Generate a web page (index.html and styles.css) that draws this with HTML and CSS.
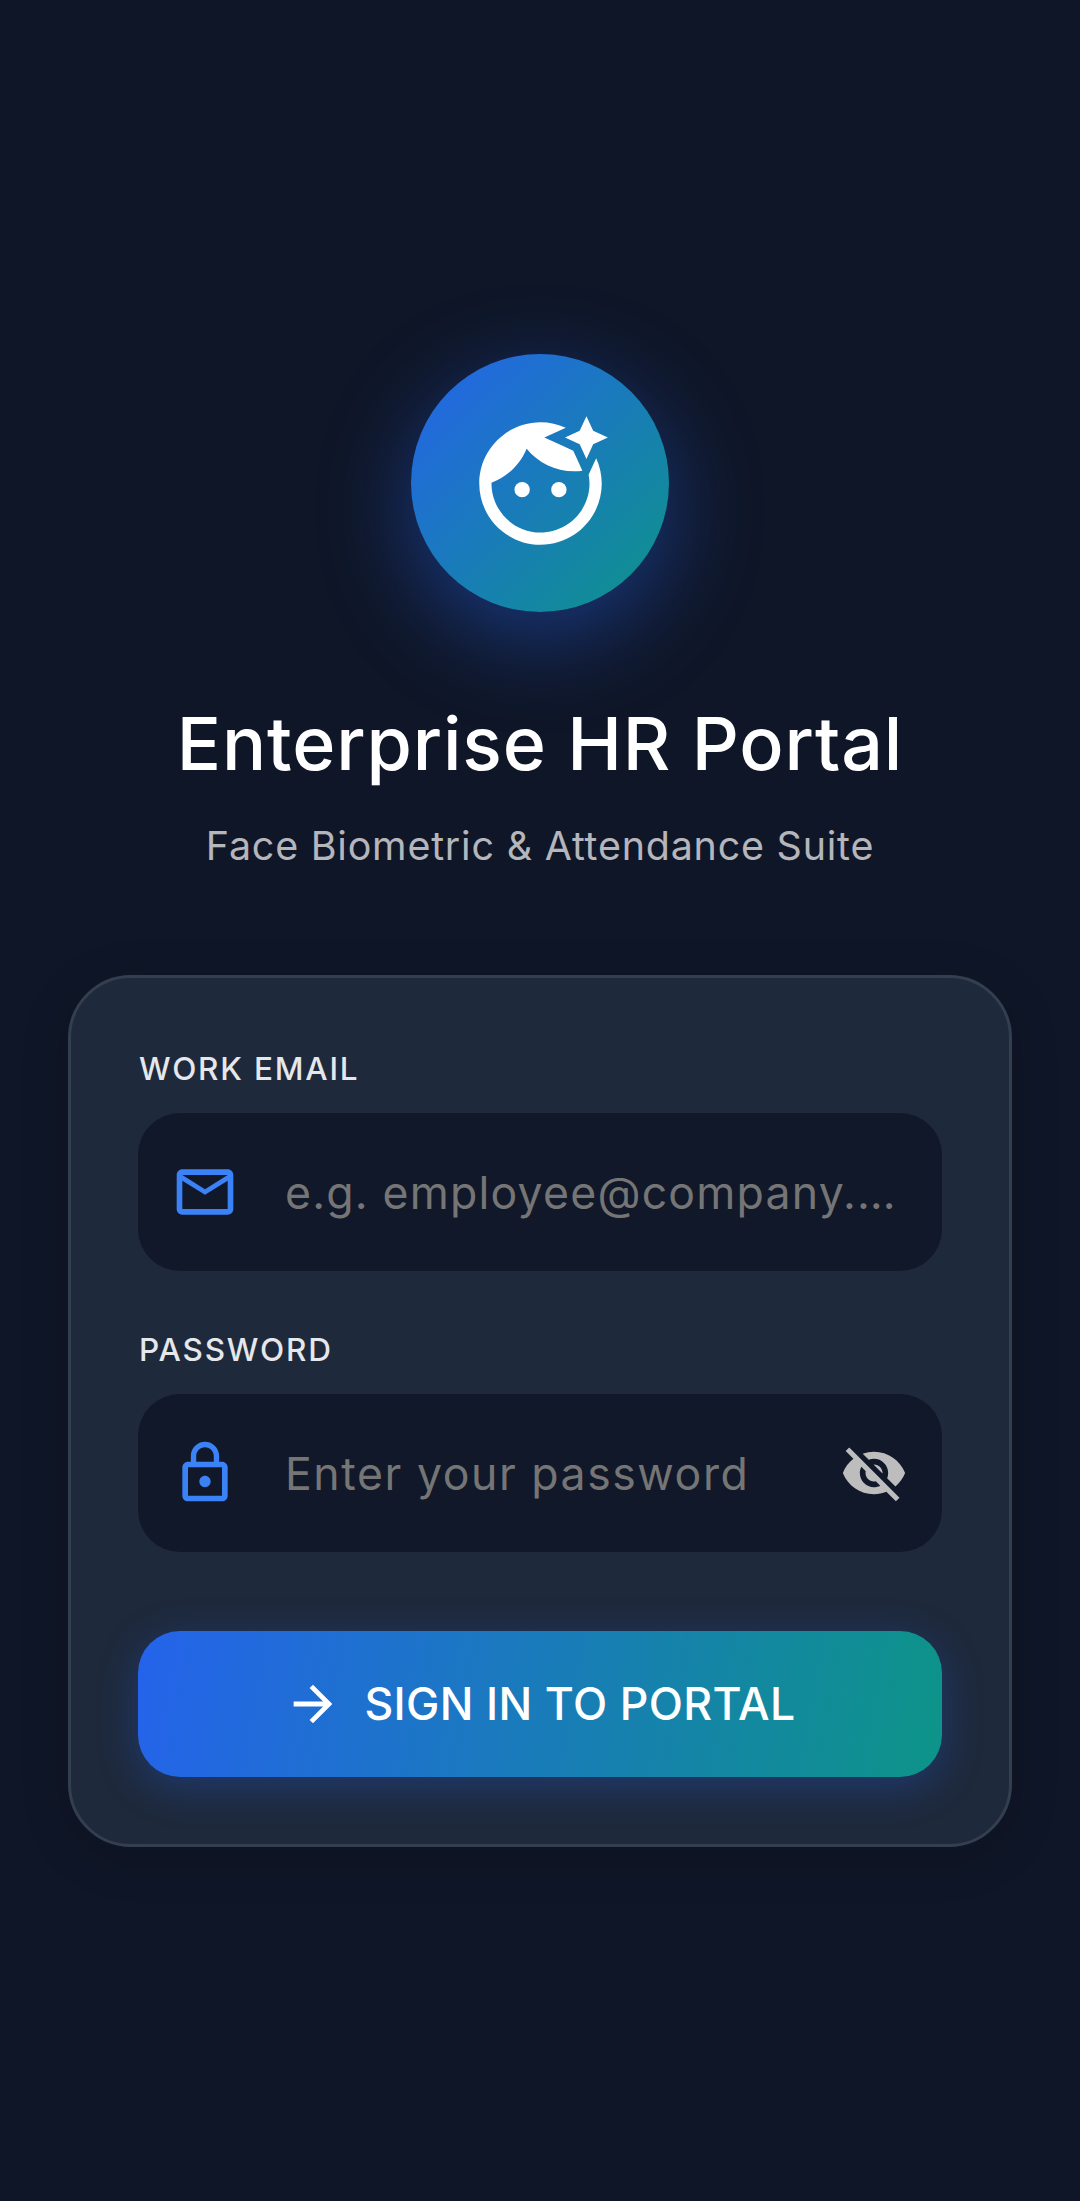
FILE: index.html
```html
<!DOCTYPE html>
<html lang="en">
<head>
<meta charset="utf-8">
<title>Enterprise HR Portal</title>
<link rel="stylesheet" href="styles.css">
</head>
<body>
<main class="screen">
  <div class="logo">
    <svg class="logo-icon" viewBox="0 0 24 24" fill="#fff"><circle cx="9" cy="13" r="1.25"/><path d="M20.77 8.58l-.92 2.01c.09.46.15.93.15 1.41 0 4.41-3.59 8-8 8s-8-3.59-8-8c0-.05.01-.1 0-.14 2.6-.98 4.69-2.99 5.74-5.55C11.58 8.56 14.37 10 17.5 10c.45 0 .89-.04 1.33-.1l-.6-1.32-.88-1.93-1.93-.88-2.79-1.27 2.79-1.27.71-.32C14.87 2.33 13.47 2 12 2 6.48 2 2 6.48 2 12s4.48 10 10 10 10-4.48 10-10c0-1.47-.33-2.87-.9-4.13l-.33.71z"/><circle cx="15" cy="13" r="1.25"/><path d="M20.6 5.6L19.5 8l-1.1-2.4L16 4.5l2.4-1.1L19.5 1l1.1 2.4L23 4.5z"/></svg>
  </div>
  <h1 class="title">Enterprise HR Portal</h1>
  <p class="subtitle">Face Biometric &amp; Attendance Suite</p>
  <form class="card">
    <div class="label">WORK EMAIL</div>
    <div class="field">
      <svg class="field-icon" viewBox="0 0 24 24" fill="#3b82f6"><path d="M20 4H4c-1.1 0-1.99.9-1.99 2L2 18c0 1.1.9 2 2 2h16c1.1 0 2-.9 2-2V6c0-1.1-.9-2-2-2zm0 14H4V8l8 5 8-5v10zm-8-7L4 6h16l-8 5z"/></svg>
      <div class="placeholder placeholder-email">e.g. employee@company.…</div>
    </div>
    <div class="label label-second">PASSWORD</div>
    <div class="field">
      <svg class="field-icon" viewBox="0 0 24 24" fill="#3b82f6"><path d="M12 17c1.1 0 2-.9 2-2s-.9-2-2-2-2 .9-2 2 .9 2 2 2zm6-9h-1V6c0-2.76-2.24-5-5-5S7 3.24 7 6v2H6c-1.1 0-2 .9-2 2v10c0 1.1.9 2 2 2h12c1.1 0 2-.9 2-2V10c0-1.1-.9-2-2-2zM8.9 6c0-1.71 1.39-3.1 3.1-3.1s3.1 1.39 3.1 3.1v2H8.9V6zM18 20H6V10h12v10z"/></svg>
      <div class="placeholder">Enter your password</div>
      <svg class="field-icon eye" viewBox="0 0 24 24" fill="#bdbdbd"><path d="M12 7c2.76 0 5 2.24 5 5 0 .65-.13 1.26-.36 1.83l2.92 2.92c1.51-1.26 2.7-2.89 3.43-4.75-1.73-4.39-6-7.5-11-7.5-1.4 0-2.74.25-3.98.7l2.16 2.16C10.74 7.13 11.35 7 12 7zM2 4.27l2.28 2.28.46.46C3.08 8.3 1.78 10.02 1 12c1.73 4.39 6 7.5 11 7.5 1.55 0 3.03-.3 4.38-.85l.42.42L19.73 22 21 20.73 3.27 3 2 4.27zM7.53 9.8l1.55 1.55c-.05.21-.08.43-.08.65 0 1.66 1.34 3 3 3 .22 0 .44-.03.65-.08l1.55 1.55c-.67.33-1.41.53-2.2.53-2.76 0-5-2.24-5-5 0-.79.2-1.53.53-2.2zm4.31-.78l3.15 3.15.02-.16c0-1.66-1.34-3-3-3l-.17.01z"/></svg>
    </div>
    <div class="button">
      <svg class="button-icon" viewBox="0 0 24 24" fill="#fff"><path d="M12 4l-1.41 1.41L16.17 11H4v2h12.17l-5.58 5.59L12 20l8-8z"/></svg>
      <span>SIGN IN TO PORTAL</span>
    </div>
  </form>
</main>
</body>
</html>
```
FILE: styles.css
```css
* { box-sizing: border-box; }
html, body { margin: 0; padding: 0; height: 100%; }
body { background: #0f1627; font-family: Inter, "Noto Sans", sans-serif; color: #fff; overflow: hidden; }
.screen { height: 2201px; padding: 354px 68px 0; display: flex; flex-direction: column; align-items: center; }
.logo { width: 258px; height: 258px; flex: none; border-radius: 50%; display: flex; align-items: center; justify-content: center; background: linear-gradient(135deg, #2563eb, #0d9488); box-shadow: 0 26px 92px rgba(37, 99, 235, 0.45); }
.logo-icon { width: 147px; height: 147px; }
.title { margin: 87px 0 0; font-size: 73.5px; line-height: 90px; font-weight: 500; letter-spacing: 0.85px; white-space: nowrap; }
.subtitle { margin: 33px 0 0; font-size: 39.4px; line-height: 48px; font-weight: 400; color: rgba(255, 255, 255, 0.7); letter-spacing: 0.8px; white-space: nowrap; }
.card { width: 944px; height: 872px; margin-top: 105px; padding: 73px 67px 0; background: #1e293b; border: 3px solid #333e4f; border-radius: 63px; box-shadow: 0 10px 50px rgba(0, 0, 0, 0.15); }
.label { font-size: 31.5px; line-height: 36px; font-weight: 500; letter-spacing: 1.8px; color: #e5e7eb; padding-left: 1px; }
.label-second { margin-top: 61px; }
.field { height: 158px; margin-top: 26px; padding: 0 34px 0 33px; border-radius: 42px; background: #111829; display: flex; align-items: center; }
.field-icon { width: 68px; height: 68px; flex: none; }
.placeholder { flex: 1; min-width: 0; margin-left: 46px; padding-top: 2px; font-size: 44.6px; letter-spacing: 1.55px; color: #757575; white-space: nowrap; }
.placeholder-email { letter-spacing: 1.2px; }
.button { height: 146px; margin-top: 79px; border-radius: 42px; background: linear-gradient(100.3deg, #2563eb, #0d9488); box-shadow: 0 10px 42px rgba(37, 99, 235, 0.3); display: flex; align-items: center; justify-content: center; gap: 22px; font-size: 44.6px; letter-spacing: 0.35px; font-weight: 500; }
.button-icon { width: 58px; height: 58px; flex: none; }
```
